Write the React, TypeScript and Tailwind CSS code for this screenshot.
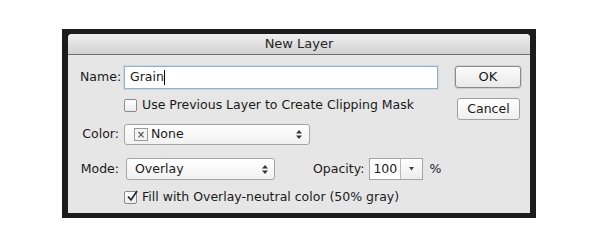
import React from "react";

const font = { fontFamily: '"DejaVu Sans", "Liberation Sans", sans-serif' };

function UpDown() {
  return (
    <svg width="6" height="9" viewBox="0 0 6 9">
      <path d="M3 0 L6 3.5 L0 3.5 Z" fill="#333" />
      <path d="M3 9 L6 5.5 L0 5.5 Z" fill="#333" />
    </svg>
  );
}

function Check({ checked }: { checked?: boolean }) {
  return (
    <div className="relative w-[13px] h-[13px] rounded-[2px] border border-[#8a8a8a] bg-gradient-to-b from-white to-[#ececec] shrink-0">
      {checked && (
        <svg className="absolute left-[1px] -top-[2px]" width="13" height="13" viewBox="0 0 13 13">
          <path d="M2 6.5 L5 10 L11 1" stroke="#222" strokeWidth="1.6" fill="none" />
        </svg>
      )}
    </div>
  );
}

export default function App() {
  return (
    <div className="w-[600px] h-[250px] bg-white pt-[29px] pl-[62px]" style={font}>
      <div className="w-[474px] h-[189px] bg-[#1c1c1c] pt-[5px] px-[6px] pb-[5px]">
        <div className="w-full h-full bg-[#e6e6e6] rounded-t-[4px] flex flex-col text-[12.5px] text-[#1a1a1a]">
          <div className="h-[21px] shrink-0 rounded-t-[4px] bg-gradient-to-b from-[#efefef] to-[#d2d2d2] border-b border-[#6e6e6e] flex items-center justify-center text-[13px] text-[#262626]">
            New Layer
          </div>
          <div className="flex flex-row pt-[11px]">
            <div className="flex flex-col pl-[12px] w-[370px] shrink-0 whitespace-nowrap">
              <div className="flex items-center h-[23px]">
                <div className="w-[39px] text-right">Name:</div>
                <div className="ml-[5px] w-[314px] h-[23px] bg-white border border-[#98aec6] shadow-[0_0_0_1px_#c9d7e6] flex items-center pl-[5px]">
                  <span>Grain</span>
                  <span className="w-px h-[15px] bg-black" />
                </div>
              </div>
              <div className="flex items-center h-[13px] mt-[10px] ml-[44px]">
                <Check />
                <span className="ml-[5px]">Use Previous Layer to Create Clipping Mask</span>
              </div>
              <div className="flex items-center h-[21px] mt-[12px]">
                <div className="w-[39px] text-right">Color:</div>
                <div className="ml-[5px] w-[186px] h-[21px] rounded-[3px] bg-gradient-to-b from-white to-[#f1f1f1] border border-[#a4a4a4] flex items-center pl-[9px] pr-[7px]">
                  <div className="w-[14px] h-[13px] border border-[#9a9a9a] bg-[#f4f4f4] flex items-center justify-center text-[10px] leading-none text-[#333]">
                    ×
                  </div>
                  <span className="ml-[3px]">None</span>
                  <div className="ml-auto flex"><UpDown /></div>
                </div>
              </div>
              <div className="flex items-center h-[22px] mt-[13px]">
                <div className="w-[39px] text-right shrink-0">Mode:</div>
                <div className="ml-[7px] w-[149px] shrink-0 h-[22px] rounded-[3px] bg-gradient-to-b from-white to-[#f1f1f1] border border-[#a4a4a4] flex items-center pl-[8px] pr-[6px]">
                  <span>Overlay</span>
                  <div className="ml-auto flex"><UpDown /></div>
                </div>
                <div className="ml-[38px] shrink-0">Opacity:</div>
                <div className="ml-[5px] h-[22px] shrink-0 flex border border-[#a4a4a4] bg-white">
                  <div className="w-[30px] flex items-center pl-[3px]">100</div>
                  <div className="w-[22px] border-l border-[#b8b8b8] bg-gradient-to-b from-white to-[#ededed] flex items-center justify-center">
                    <svg width="5" height="4" viewBox="0 0 5 4"><path d="M0 0 L5 0 L2.5 3.5 Z" fill="#444" /></svg>
                  </div>
                </div>
                <div className="ml-[6px] shrink-0">%</div>
              </div>
              <div className="flex items-center h-[13px] mt-[11px] ml-[44px]">
                <Check checked />
                <span className="ml-[5px]">Fill with Overlay-neutral color (50% gray)</span>
              </div>
            </div>
            <div className="flex flex-col ml-[17px]">
              <div className="w-[66px] h-[22px] rounded-[3px] border border-[#8a8a8a] bg-gradient-to-b from-[#fbfbfb] to-[#e9e9e9] shadow-[0_0_0_1px_#cfcfcf] flex items-center justify-center text-[13px]">
                OK
              </div>
              <div className="ml-[2px] mt-[10px] w-[63px] h-[22px] rounded-[3px] border border-[#a0a0a0] bg-gradient-to-b from-white to-[#efefef] flex items-center justify-center">
                Cancel
              </div>
            </div>
          </div>
        </div>
      </div>
    </div>
  );
}
